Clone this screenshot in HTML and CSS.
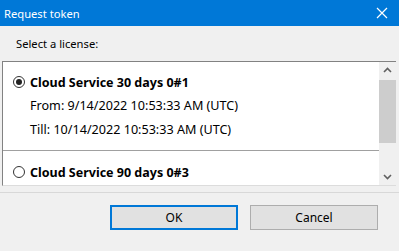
FILE: index.html
```html
<!DOCTYPE html>
<html lang="en">
<head>
    <meta charset="UTF-8">
    <title>Request token</title>
    <link rel="stylesheet" href="styles.css">
</head>
<body>
    <div class="dialog">
        <div class="titlebar">
            <span class="title">Request token</span>
            <svg class="close" width="12" height="12" viewBox="0 0 12 12">
                <path d="M1 1 L11 11 M11 1 L1 11" stroke="#fff" stroke-width="1.2"/>
            </svg>
        </div>

        <div class="label">Select a license:</div>

        <!-- License list -->
        <div class="list">
            <div class="items">
                <div class="item">
                    <div class="radio-row">
                        <span class="radio checked"></span>
                        <span class="name">Cloud Service 30 days 0#1</span>
                    </div>
                    <div class="detail first">From: 9/14/2022 10:53:33 AM (UTC)</div>
                    <div class="detail">Till: 10/14/2022 10:53:33 AM (UTC)</div>
                </div>
                <div class="item">
                    <div class="radio-row">
                        <span class="radio"></span>
                        <span class="name">Cloud Service 90 days 0#3</span>
                    </div>
                </div>
            </div>
            <div class="scrollbar">
                <svg class="arrow" width="17" height="17" viewBox="0 0 17 17">
                    <path d="M5 10 L8.5 6.5 L12 10" fill="none" stroke="#606060" stroke-width="1.6"/>
                </svg>
                <div class="track"><div class="thumb"></div></div>
                <svg class="arrow" width="17" height="17" viewBox="0 0 17 17">
                    <path d="M5 7 L8.5 10.5 L12 7" fill="none" stroke="#606060" stroke-width="1.6"/>
                </svg>
            </div>
        </div>

        <div class="buttons">
            <button class="btn default">OK</button>
            <button class="btn">Cancel</button>
        </div>
    </div>
</body>
</html>
```

FILE: styles.css
```css
body {
    margin: 0;
    font-family: "Noto Sans", "Open Sans", sans-serif;
    font-size: 12px;
    color: #000;
    background-color: #f0f0f0;
}
.dialog {
    width: 399px;
    height: 251px;
    display: flex;
    flex-direction: column;
    background-color: #f0f0f0;
}
.titlebar {
    height: 26px;
    background-color: #0078d7;
    color: #fff;
    display: flex;
    align-items: center;
    justify-content: space-between;
    padding: 0 11px 0 4px;
    flex-shrink: 0;
}
.title {
    font-size: 11.2px;
}
.label {
    padding: 10px 0 0 16px;
    height: 25px;
    font-size: 11.2px;
}
.list {
    margin: 0 3px 0 2px;
    height: 123px;
    border-top: 1px solid #828282;
    border-left: 1px solid #828282;
    border-bottom: 1px solid #dcdcdc;
    background-color: #fff;
    display: flex;
}
.items {
    flex: 1;
}
.item {
    padding: 10px 0 8px 10px;
    border-bottom: 1px solid #a0a0a0;
}
.item + .item {
    padding-top: 11px;
    border-bottom: none;
}
.radio-row {
    display: flex;
    align-items: center;
    gap: 5px;
    height: 20px;
}
.radio {
    width: 12px;
    height: 12px;
    border: 1px solid #333;
    border-radius: 50%;
    box-sizing: border-box;
    position: relative;
}
.radio.checked::after {
    content: "";
    position: absolute;
    left: 2px;
    top: 2px;
    width: 6px;
    height: 6px;
    border-radius: 50%;
    background-color: #222;
}
.name {
    font-weight: bold;
    font-size: 12.5px;
}
.detail {
    padding-left: 17px;
    height: 24px;
    line-height: 24px;
    font-size: 12.6px;
}
.detail.first {
    margin-top: 2px;
}
.scrollbar {
    width: 17px;
    background-color: #f0f0f0;
    display: flex;
    flex-direction: column;
}
.arrow {
    display: block;
}
.track {
    flex: 1;
    width: 100%;
}
.thumb {
    margin-top: 1px;
    height: 63px;
    background-color: #cdcdcd;
}
.buttons {
    margin-top: 6px;
    border-top: 1px solid #d8d8d8;
    flex: 1;
    display: flex;
    justify-content: flex-end;
    align-items: flex-start;
    gap: 12px;
    padding: 12px 21px 0 0;
}
.btn {
    width: 128px;
    height: 25px;
    font-family: inherit;
    font-size: 12px;
    background-color: #e1e1e1;
    border: 1px solid #adadad;
}
.btn.default {
    border: 2px solid #0078d7;
}
```
